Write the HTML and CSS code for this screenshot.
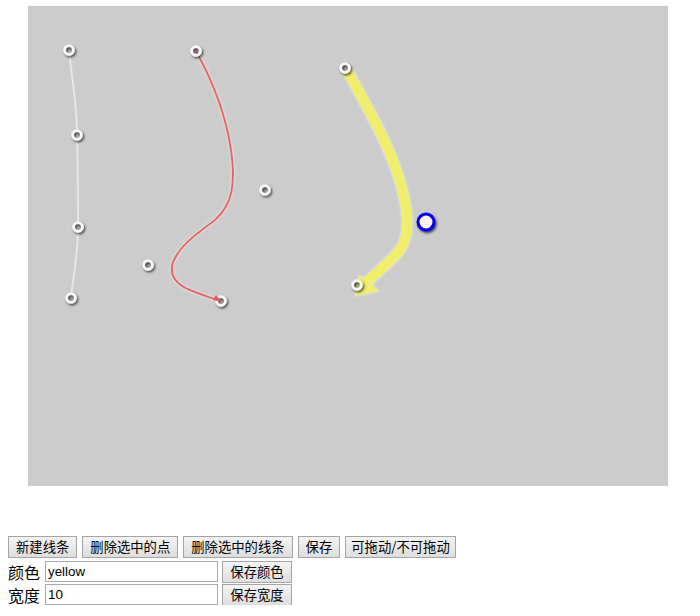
FILE: index.html
```html
<!DOCTYPE html>
<html lang="zh">
<head>
<meta charset="utf-8">
<title>线条编辑</title>
<link rel="stylesheet" href="styles.css">
</head>
<body>
<div class="stage">
  <svg class="canvas" width="640" height="480" viewBox="28 6 640 480" xmlns="http://www.w3.org/2000/svg">
    <defs>
      <filter id="ptshadow" x="-100%" y="-100%" width="300%" height="300%">
        <feDropShadow dx="1.3" dy="1.6" stdDeviation="1" flood-color="#000" flood-opacity="0.7"/>
      </filter>
      <filter id="glow" x="-20%" y="-20%" width="140%" height="140%">
        <feDropShadow dx="0" dy="0" stdDeviation="1.6" flood-color="#ffffff" flood-opacity="0.7"/>
      </filter>
    </defs>
    <rect x="28" y="6" width="640" height="480" fill="#cccccc"/>

    <path d="M69,50 C72,80 77,105 77,135 C78,165 78,195 78,227 C78,255 73,280 71,298" fill="none" stroke="#e6e6e6" stroke-width="2"/>

    <path d="M196,51 C212,80 226,115 231,150 C236,185 232,205 215,220 C198,233 180,245 173,262 C168,278 180,287 195,292 C205,296 212,298 217,300" fill="none" stroke="#e66666" stroke-width="2" filter="url(#glow)"/>

    <g filter="url(#glow)">
      <path d="M348,72 C366,105 390,145 401,185 C409,215 410,235 400,250 C390,262 376,273 365,284" fill="none" stroke="#f0ee6a" stroke-width="10"/>
      <polygon points="355,296 359,275 379,291" fill="#f0ee6a"/>
    </g>

    <g class="pts" filter="url(#ptshadow)" fill="#000" fill-opacity="0.12" stroke="#f8f8f8" stroke-width="2.8">
      <circle cx="69" cy="50" r="4.4"/>
      <circle cx="77" cy="135" r="4.4"/>
      <circle cx="78" cy="227" r="4.4"/>
      <circle cx="71" cy="298" r="4.4"/>
      <circle cx="196" cy="51" r="4.4"/>
      <circle cx="265" cy="190" r="4.4"/>
      <circle cx="148" cy="265" r="4.4"/>
      <circle cx="221" cy="301" r="4.4"/>
      <circle cx="345" cy="68" r="4.4"/>
      <circle cx="357" cy="285" r="4.4"/>
    </g>
    <polygon points="222,302 213,300 216,295" fill="#e05a5a"/>

    <circle cx="426" cy="222" r="8" fill="#fff3f3" stroke="#0000ee" stroke-width="3" filter="url(#ptshadow)"/>
  </svg>
</div>

<div class="toolbar">
  <button class="btn">新建线条</button>
  <button class="btn">删除选中的点</button>
  <button class="btn">删除选中的线条</button>
  <button class="btn">保存</button>
  <button class="btn">可拖动/不可拖动</button>
</div>
<div class="field">
  <span class="label">颜色</span>
  <input class="text" type="text" value="yellow">
  <button class="btn">保存颜色</button>
</div>
<div class="field">
  <span class="label">宽度</span>
  <input class="text" type="text" value="10">
  <button class="btn">保存宽度</button>
</div>
</body>
</html>
```

FILE: styles.css
```css
html, body {
  margin: 0;
  padding: 0;
  background: #ffffff;
}

body {
  padding: 0 8px;
  font-family: "Noto Sans CJK SC", "Liberation Sans", sans-serif;
  color: #000;
}

.stage {
  margin: 6px 0 0 20px;
  width: 640px;
  height: 480px;
}

.canvas {
  display: block;
}

.toolbar {
  margin-top: 50px;
  display: flex;
  gap: 5px;
  height: 22px;
}

.btn {
  box-sizing: border-box;
  height: 22px;
  padding: 0 7px;
  margin: 0;
  border: 1px solid #a5a5a5;
  border-radius: 0;
  background: linear-gradient(#f4f4f4, #dedede);
  font-family: "Noto Sans CJK SC", sans-serif;
  font-size: 13.33px;
  line-height: 20px;
  color: #000;
  white-space: nowrap;
}

.toolbar .btn:last-child {
  padding: 0 5px;
}

.field {
  margin-top: 3px;
  display: flex;
  align-items: center;
  height: 21px;
}

.field + .field {
  margin-top: 2px;
}

.label {
  font-size: 16px;
  line-height: 20px;
  width: 32px;
  margin-right: 5px;
  white-space: nowrap;
}

.text {
  box-sizing: border-box;
  width: 173px;
  height: 21px;
  margin: 0 4px 0 0;
  padding: 0 2px;
  border: 1px solid #a9a9a9;
  font-family: "Liberation Sans", sans-serif;
  font-size: 13.33px;
  color: #000;
}

.field .btn {
  width: 70px;
  padding: 0;
}
```
